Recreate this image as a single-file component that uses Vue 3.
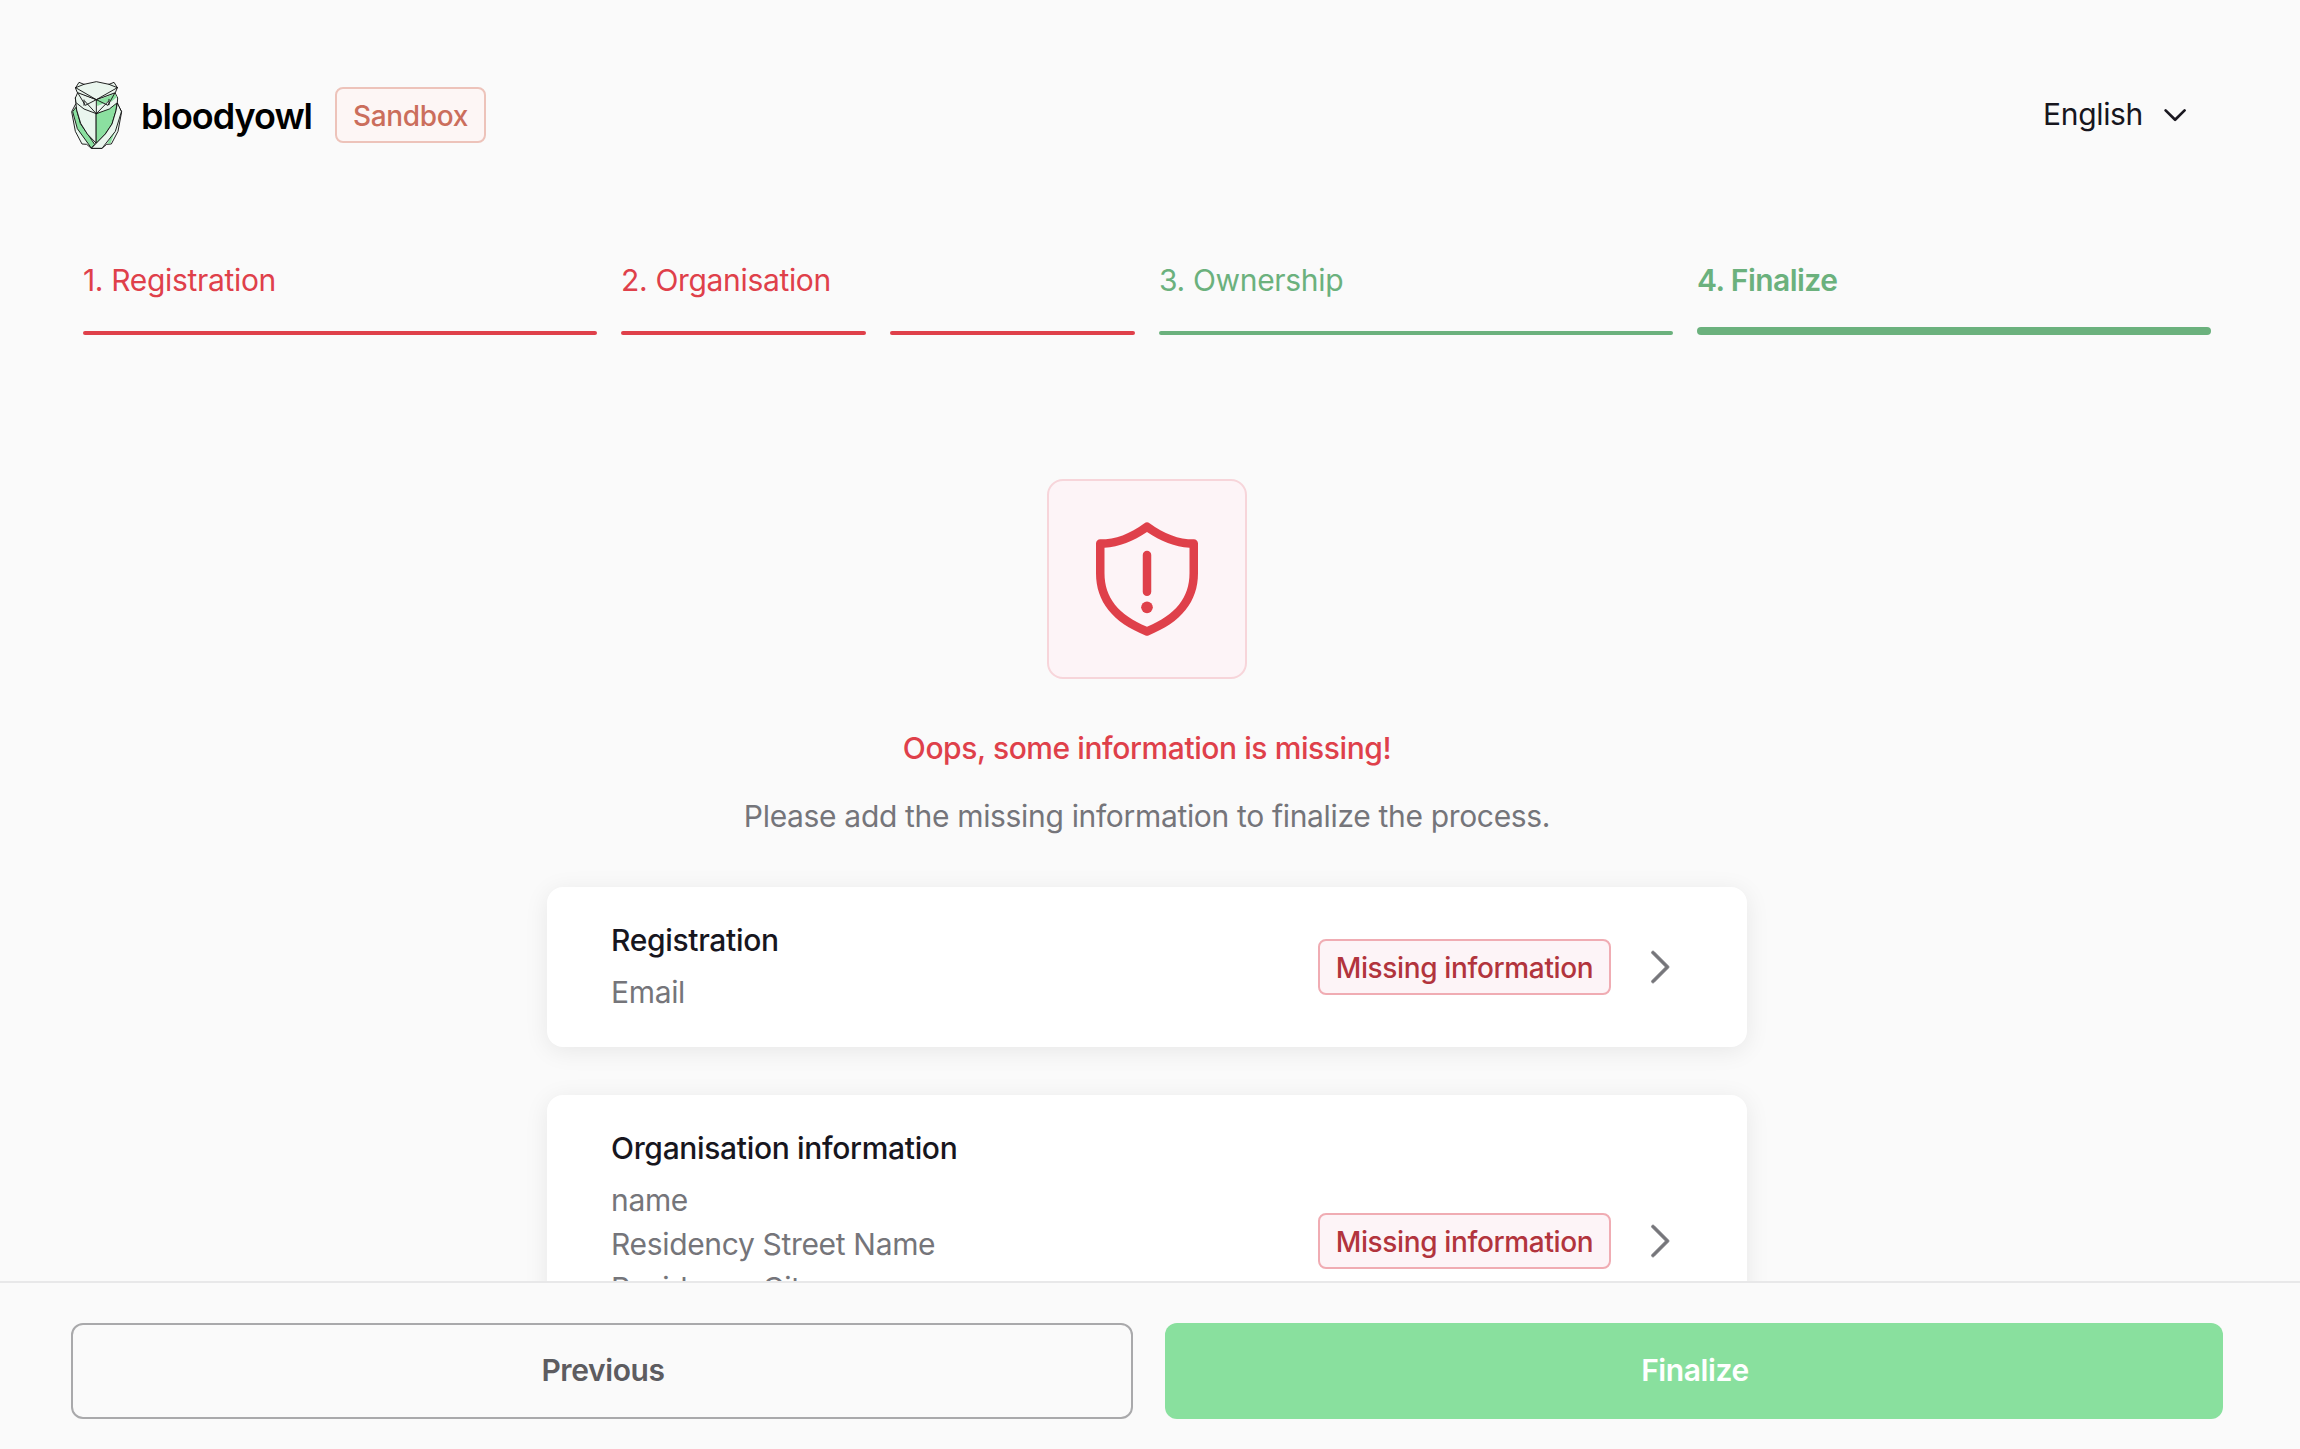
<script setup>
const steps = [
  { label: '1. Registration', tone: 'negative', bars: 1 },
  { label: '2. Organisation', tone: 'negative', bars: 2 },
  { label: '3. Ownership', tone: 'positive', bars: 1 },
  { label: '4. Finalize', tone: 'positive', bars: 1, active: true },
]

const sections = [
  { title: 'Registration', fields: ['Email'] },
  {
    title: 'Organisation information',
    fields: ['name', 'Residency Street Name', 'Residency City', 'Residency Post Code'],
  },
]
</script>

<template>
  <div class="page">
    <header class="header">
      <svg class="logo" viewBox="30 30 159 210" fill="none" stroke="#0b0b0b" stroke-width="2.7" stroke-linejoin="round" stroke-linecap="round">
        <!-- wings -->
        <path fill="#eaf6ee" d="M47 102 35 125 46 184 66 222 80 223 94 235H126L140 223 154 222 174 184 185 125 172 102Z" />
        <path fill="#8be0a0" d="M47 113 38 125 52 176 94 234 104 223 62 162Z" />
        <path fill="#8be0a0" stroke="none" d="M173 160 152 220 141 221 160 186Z" />
        <!-- chest -->
        <path fill="#eaf6ee" d="M46 84 50 120 62 160 82 192 109 220V131Z" />
        <path fill="#8be0a0" d="M109 131 150 112 171 96 168 122 156 162 136 192 109 220Z" />
        <path fill="#eaf6ee" d="M172 100 168 122 156 162 136 192 94 235H126L166 184 184 126Z" />
        <!-- face -->
        <path fill="#eaf6ee" d="M53 68 46 84 48 98 72 117 109 131 148 117 172 98 173 84 165 68 109 88Z" />
        <path fill="#8be0a0" stroke="none" d="M110 91 164 71 171 81 154 95 150 90 140 97 112 108Z" />
        <path d="M53 68 76 106 109 89 144 106 165 68M109 131 74 93M109 131 146 93M72 90V106M147 88V104M109 89V131" />
        <!-- crown -->
        <path fill="#eaf6ee" d="M47 53 57 37 72 43 109 35 147 43 162 37 172 53 166 68 109 89 53 68Z" />
        <path d="M47 53 72 43M172 53 147 43M47 53 109 89 172 53" />
      </svg>
      <span class="brand">bloodyowl</span>
      <span class="tag tag-sandbox">Sandbox</span>
      <div class="language">
        <span>English</span>
        <svg class="caret" viewBox="0 0 24 16" fill="none" stroke="#1a1820" stroke-width="2.7" stroke-linecap="round" stroke-linejoin="round">
          <path d="M2.6 3.4 12.1 12.8 21.6 3.4" />
        </svg>
      </div>
    </header>

    <nav class="steps">
      <div v-for="step in steps" :key="step.label" class="step" :class="[step.tone, { active: step.active }]">
        <span class="step-label">{{ step.label }}</span>
        <div class="bars">
          <i v-for="n in step.bars" :key="n" class="bar"></i>
        </div>
      </div>
    </nav>

    <main class="content">
      <div class="tile">
        <svg class="shield" viewBox="0 0 24 24" fill="#df404a">
          <path fill-rule="evenodd" d="M3 5.75c0-.41.34-.75.75-.75 2.66 0 5.26-.94 7.8-2.85.27-.2.63-.2.9 0C14.99 4.05 17.59 5 20.25 5c.41 0 .75.34.75.75V11c0 5-2.96 8.68-8.73 10.95a.75.75 0 0 1-.54 0C5.96 19.68 3 16 3 11V5.75Zm1.5.73V11c0 4.26 2.45 7.38 7.5 9.44 5.05-2.06 7.5-5.18 7.5-9.44V6.48c-2.6-.17-5.1-1.1-7.5-2.77-2.4 1.67-4.9 2.6-7.5 2.77Z" />
          <rect x="11.25" y="7" width="1.5" height="8" rx=".75" />
          <circle cx="12" cy="17" r="1.03" />
        </svg>
      </div>
      <h1 class="title">Oops, some information is missing!</h1>
      <p class="subtitle">Please add the missing information to finalize the process.</p>

      <section v-for="section in sections" :key="section.title" class="card">
        <div class="card-body">
          <h2 class="card-title">{{ section.title }}</h2>
          <p v-for="field in section.fields" :key="field" class="field">{{ field }}</p>
        </div>
        <span class="tag tag-missing">Missing information</span>
        <svg class="chevron" viewBox="0 0 24 24" fill="#75757a" stroke="#75757a" stroke-width=".35">
          <path d="M8.47 4.22c-.3.3-.3.77 0 1.06L15.19 12l-6.72 6.72c-.3.3-.3.77 0 1.06.3.3.77.3 1.06 0l7.25-7.25c.3-.3.3-.77 0-1.06L9.53 4.22a.75.75 0 0 0-1.06 0Z" />
        </svg>
      </section>
    </main>

    <footer class="footer">
      <button class="button previous">Previous</button>
      <button class="button finalize">Finalize</button>
    </footer>
  </div>
</template>

<style>
body {
  background: #fafafa;
  overflow: hidden;
}
</style>

<style scoped>
.page {
  display: flex;
  flex-direction: column;
  height: 1449px;
  width: 2300px;
  overflow: hidden;
  background: #fafafa;
  font-family: Inter, 'Liberation Sans', sans-serif;
  font-size: 30px;
  line-height: 44px;
  letter-spacing: -0.33px;
  color: #17161e;
}
.header {
  display: flex;
  align-items: center;
  flex: none;
  height: 70px;
  margin: 80px 77px 0 70px;
}
.logo {
  width: 53px;
  height: 70px;
  flex: none;
}
.brand {
  width: 194px;
  margin-left: 18px;
  padding-top: 2px;
  font-size: 36px;
  font-weight: 600;
  letter-spacing: -1px;
  color: #000;
}
.tag {
  display: flex;
  align-items: center;
  justify-content: center;
  flex: none;
  box-sizing: border-box;
  height: 56px;
  padding-top: 2px;
  border: 2px solid;
  border-radius: 8px;
  font-size: 28px;
  font-weight: 500;
  letter-spacing: -0.36px;
  white-space: nowrap;
}
.tag-sandbox {
  width: 151px;
  color: #cb6e5c;
  background: #fdf6f5;
  border-color: #edc3ba;
}
.language {
  display: flex;
  align-items: center;
  margin-left: auto;
  margin-right: 36px;
  gap: 20px;
}
.language span {
  padding-bottom: 2px;
}
.caret {
  width: 24px;
  height: 16px;
}
.steps {
  display: flex;
  gap: 24px;
  flex: none;
  margin: 108px 89px 0 83px;
}
.step {
  flex: 1;
  display: flex;
  flex-direction: column;
  height: 77px;
}
.bars {
  display: flex;
  gap: 24px;
  margin-top: auto;
}
.bar {
  flex: 1;
  height: 4px;
  border-radius: 2px;
  background: currentColor;
}
.active .bar {
  height: 8px;
  border-radius: 4px;
}
.negative {
  color: #df404a;
}
.positive {
  color: #6bb17d;
}
.active .step-label {
  font-weight: 600;
  letter-spacing: -0.55px;
}
.content {
  display: flex;
  flex-direction: column;
  align-items: center;
  flex: 1;
  min-height: 0;
  overflow: hidden;
  padding: 144px 6px 0 0;
}
.tile {
  display: flex;
  align-items: center;
  justify-content: center;
  flex: none;
  box-sizing: border-box;
  width: 200px;
  height: 200px;
  border: 2px solid #f7d5da;
  border-radius: 16px;
  background: #fdf4f7;
}
.shield {
  width: 136px;
  height: 136px;
}
.title,
.subtitle,
.card-title,
.field {
  margin: 0;
  font-size: 30px;
}
.title {
  margin-top: 47px;
  font-weight: 500;
  letter-spacing: -0.42px;
  color: #df404a;
}
.subtitle {
  margin-top: 24px;
  color: #75757a;
}
.card {
  display: flex;
  align-items: center;
  flex: none;
  box-sizing: border-box;
  width: 1200px;
  margin-top: 48px;
  padding: 32px 64px;
  border-radius: 16px;
  background: #fff;
  box-shadow: 0 4px 24px rgba(0, 0, 0, 0.08);
}
.subtitle + .card {
  margin-top: 49px;
}
.card-body {
  flex: 1;
  margin: -1px 0 1px;
}
.card-title {
  margin-bottom: 8px;
  font-weight: 500;
}
.field {
  color: #75757a;
}
.tag-missing {
  width: 293px;
  color: #b2343d;
  background: #fdf4f7;
  border-color: #f0acb3;
}
.chevron {
  flex: none;
  width: 48px;
  height: 48px;
  margin-left: 24px;
}
.footer {
  display: flex;
  gap: 32px;
  flex: none;
  box-sizing: border-box;
  height: 168px;
  padding: 40px 77px 30px 71px;
  border-top: 2px solid #e8e8e9;
  background: #fafafa;
}
.button {
  box-sizing: border-box;
  height: 96px;
  padding: 0 0 2px 2px;
  border: 0;
  border-radius: 12px;
  font: 600 30px/44px Inter, 'Liberation Sans', sans-serif;
  letter-spacing: -0.4px;
}
.previous {
  flex: 0 0 1062px;
  border: 2px solid #a9a9ab;
  background: #fafafa;
  color: #5d5c60;
}
.finalize {
  flex: 1;
  background: #89e09e;
  color: #fff;
}
</style>
